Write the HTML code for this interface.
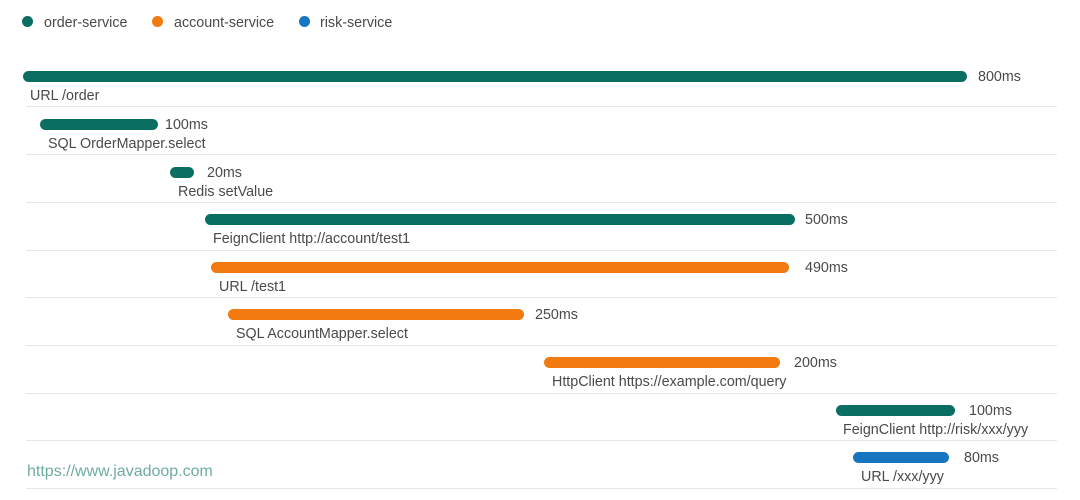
<!DOCTYPE html>
<html><head><style>
body{margin:0;width:1080px;height:500px;background:#fff;font-family:"Liberation Sans",sans-serif;color:#4a4a4a;font-size:14.3px;position:relative;overflow:hidden}
.a{position:absolute;white-space:nowrap;margin-top:1px}
.d{position:absolute;width:11px;height:11px;border-radius:50%}
.b{position:absolute;height:11px;border-radius:6px}
.l{position:absolute;left:26px;width:1031px;height:1px;background:#e6e6e6}
.t{background:#0b6e62}.o{background:#f27a10}.u{background:#1776bf}
</style></head><body>
<div class="d t" style="left:22px;top:16px"></div><div class="a" style="left:44px;top:14px">order-service</div>
<div class="d o" style="left:152px;top:16px"></div><div class="a" style="left:174px;top:14px">account-service</div>
<div class="d u" style="left:299px;top:16px"></div><div class="a" style="left:320px;top:14px">risk-service</div>

<div class="b t" style="left:23px;width:944px;top:71px"></div><div class="a" style="left:978px;top:68px">800ms</div><div class="a" style="left:30px;top:87px">URL /order</div><div class="l" style="top:106px"></div>
<div class="b t" style="left:40px;width:118px;top:119px"></div><div class="a" style="left:165px;top:116px">100ms</div><div class="a" style="left:48px;top:135px">SQL OrderMapper.select</div><div class="l" style="top:154px"></div>
<div class="b t" style="left:170px;width:24px;top:167px"></div><div class="a" style="left:207px;top:164px">20ms</div><div class="a" style="left:178px;top:183px">Redis setValue</div><div class="l" style="top:202px"></div>
<div class="b t" style="left:205px;width:590px;top:214px"></div><div class="a" style="left:805px;top:211px">500ms</div><div class="a" style="left:213px;top:230px">FeignClient http://account/test1</div><div class="l" style="top:250px"></div>
<div class="b o" style="left:211px;width:578px;top:262px"></div><div class="a" style="left:805px;top:259px">490ms</div><div class="a" style="left:219px;top:278px">URL /test1</div><div class="l" style="top:297px"></div>
<div class="b o" style="left:228px;width:296px;top:309px"></div><div class="a" style="left:535px;top:306px">250ms</div><div class="a" style="left:236px;top:325px">SQL AccountMapper.select</div><div class="l" style="top:345px"></div>
<div class="b o" style="left:544px;width:236px;top:357px"></div><div class="a" style="left:794px;top:354px">200ms</div><div class="a" style="left:552px;top:373px">HttpClient https://example.com/query</div><div class="l" style="top:393px"></div>
<div class="b t" style="left:836px;width:119px;top:405px"></div><div class="a" style="left:969px;top:402px">100ms</div><div class="a" style="left:843px;top:421px">FeignClient http://risk/xxx/yyy</div><div class="l" style="top:440px"></div>
<div class="b u" style="left:853px;width:96px;top:452px"></div><div class="a" style="left:964px;top:449px">80ms</div><div class="a" style="left:861px;top:468px">URL /xxx/yyy</div><div class="l" style="top:488px"></div>
<div class="a" style="left:27px;top:462px;color:#6fac9f;font-size:16px">https://www.javadoop.com</div>
</body></html>
